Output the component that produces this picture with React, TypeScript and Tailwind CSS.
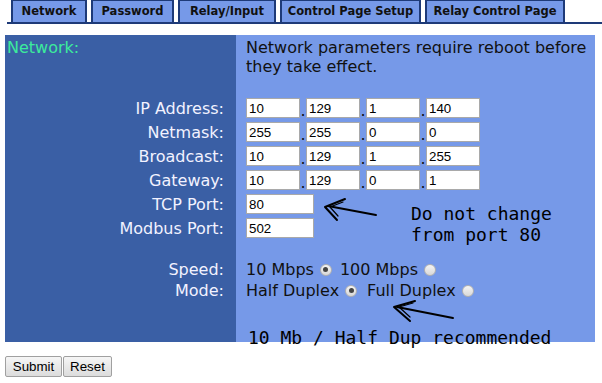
import React from 'react'

const tabs = [
  { label: 'Network', w: 'w-[76px]' },
  { label: 'Password', w: 'w-[83px]' },
  { label: 'Relay/Input', w: 'w-[98px]' },
  { label: 'Control Page Setup', w: 'w-[141px]' },
  { label: 'Relay Control Page', w: 'w-[140px]' },
]

const ipRows = [
  { label: 'IP Address:', v: ['10', '129', '1', '140'] },
  { label: 'Netmask:', v: ['255', '255', '0', '0'] },
  { label: 'Broadcast:', v: ['10', '129', '1', '255'] },
  { label: 'Gateway:', v: ['10', '129', '0', '1'] },
]

function Field({ value, w = 'w-[54px]' }: { value: string; w?: string }) {
  return (
    <input
      defaultValue={value}
      className={`${w} h-[20px] bg-white border border-[#a9a9a9] px-[2px] text-[13.33px] text-black outline-none font-['Liberation_Sans',Arial,sans-serif]`}
    />
  )
}

function Radio({ checked }: { checked?: boolean }) {
  return (
    <span className="inline-flex items-center justify-center w-[12px] h-[12px] rounded-full border border-[#b0b0b0] bg-gradient-to-b from-[#f4f4f4] to-[#d8d8d8] align-middle">
      {checked && <span className="w-[5px] h-[5px] rounded-full bg-[#444]" />}
    </span>
  )
}

const leftCell = 'bg-[#3a5fa5] text-[#f2f2ff] text-right pr-[12px]'
const rightCell = 'bg-[#7699e8] text-[#111] pl-[10px]'

export default function App() {
  return (
    <div className="relative w-[602px] h-[383px] bg-white overflow-hidden font-['DejaVu_Sans',Verdana,sans-serif]">
      {/* tab strip */}
      <div className="flex items-end gap-[4px] pl-[4px] pt-[1px] ml-[7px] border-b-2 border-[#1e3a78] h-[24px]">
        {tabs.map((t) => (
          <div
            key={t.label}
            className={`${t.w} h-[23px] flex items-center justify-center bg-[#7699e8] border-2 border-b-0 border-[#1e3a78] text-[11.5px] font-bold text-[#111]`}
          >
            {t.label}
          </div>
        ))}
      </div>

      {/* form panel */}
      <div className="mt-[11px] ml-[5px] grid grid-cols-[231px_359px] text-[16px] leading-[19px]">
        <div className="bg-[#3a5fa5] h-[61px] pt-[3px] pl-[2px] text-[#3ceb9c]">Network:</div>
        <div className={`${rightCell} h-[61px] pt-[3px] pr-[4px]`}>
          Network parameters require reboot before they take effect.
        </div>

        {ipRows.map((r) => (
          <React.Fragment key={r.label}>
            <div className={`${leftCell} h-[24px] flex items-center justify-end`}>{r.label}</div>
            <div className={`${rightCell} h-[24px] flex items-center`}>
              {r.v.map((v, i) => (
                <React.Fragment key={i}>
                  {i > 0 && <span className="w-[6px] text-center self-end pb-[1px] leading-[16px]">.</span>}
                  <Field value={v} />
                </React.Fragment>
              ))}
            </div>
          </React.Fragment>
        ))}

        <div className={`${leftCell} h-[24px] flex items-center justify-end`}>TCP Port:</div>
        <div className={`${rightCell} h-[24px] flex items-center`}>
          <Field value="80" w="w-[68px]" />
        </div>
        <div className={`${leftCell} h-[24px] flex items-center justify-end`}>Modbus Port:</div>
        <div className={`${rightCell} h-[24px] flex items-center`}>
          <Field value="502" w="w-[68px]" />
        </div>

        <div className="bg-[#3a5fa5] h-[19px]" />
        <div className="bg-[#7699e8] h-[19px]" />

        <div className={`${leftCell} h-[21px] flex items-center justify-end`}>Speed:</div>
        <div className={`${rightCell} h-[21px] flex items-center gap-[6px]`}>
          <span>10 Mbps</span>
          <Radio checked />
          <span className="ml-[2px]">100 Mbps</span>
          <Radio />
        </div>
        <div className={`${leftCell} h-[21px] flex items-center justify-end`}>Mode:</div>
        <div className={`${rightCell} h-[21px] flex items-center gap-[6px]`}>
          <span>Half Duplex</span>
          <Radio checked />
          <span className="ml-[4px]">Full Duplex</span>
          <Radio />
        </div>

        <div className="bg-[#3a5fa5] h-[41px]" />
        <div className="bg-[#7699e8] h-[41px] pl-[12px] pt-[26px] whitespace-nowrap">
          <span className="font-['DejaVu_Sans_Mono',monospace] text-[18px] leading-[21px] text-black">
            10 Mb / Half Dup recommended
          </span>
        </div>
      </div>

      {/* buttons */}
      <div className="flex gap-[1px] ml-[5px] mt-[14px] font-['Liberation_Sans',Arial,sans-serif] text-[13.33px]">
        <button className="w-[57px] h-[21px] border border-[#a0a0a0] rounded-[2px] bg-gradient-to-b from-[#f6f6f6] to-[#dcdcdc] text-black">
          Submit
        </button>
        <button className="w-[49px] h-[21px] border border-[#a0a0a0] rounded-[2px] bg-gradient-to-b from-[#f6f6f6] to-[#dcdcdc] text-black">
          Reset
        </button>
      </div>

      {/* hand-drawn annotations */}
      <div className="absolute left-[411px] top-[203px] font-['DejaVu_Sans_Mono',monospace] text-[18px] leading-[21px] text-black whitespace-pre">
        {'Do not change\nfrom port 80'}
      </div>
      <svg className="absolute left-0 top-0" width="602" height="383" viewBox="0 0 602 383" fill="none" stroke="#000" strokeWidth="2" strokeLinecap="round" strokeLinejoin="round">
        <path d="M376 215 L328 206" />
        <path d="M345 199 L325 207 L337 220" />
        <path d="M343 202 L330 207 L338 216" strokeWidth="1.2" />
        <path d="M453 318 L397 307" />
        <path d="M415 301 L394 307 L410 321" />
        <path d="M413 303 L399 307 L410 317" strokeWidth="1.2" />
      </svg>
    </div>
  )
}
